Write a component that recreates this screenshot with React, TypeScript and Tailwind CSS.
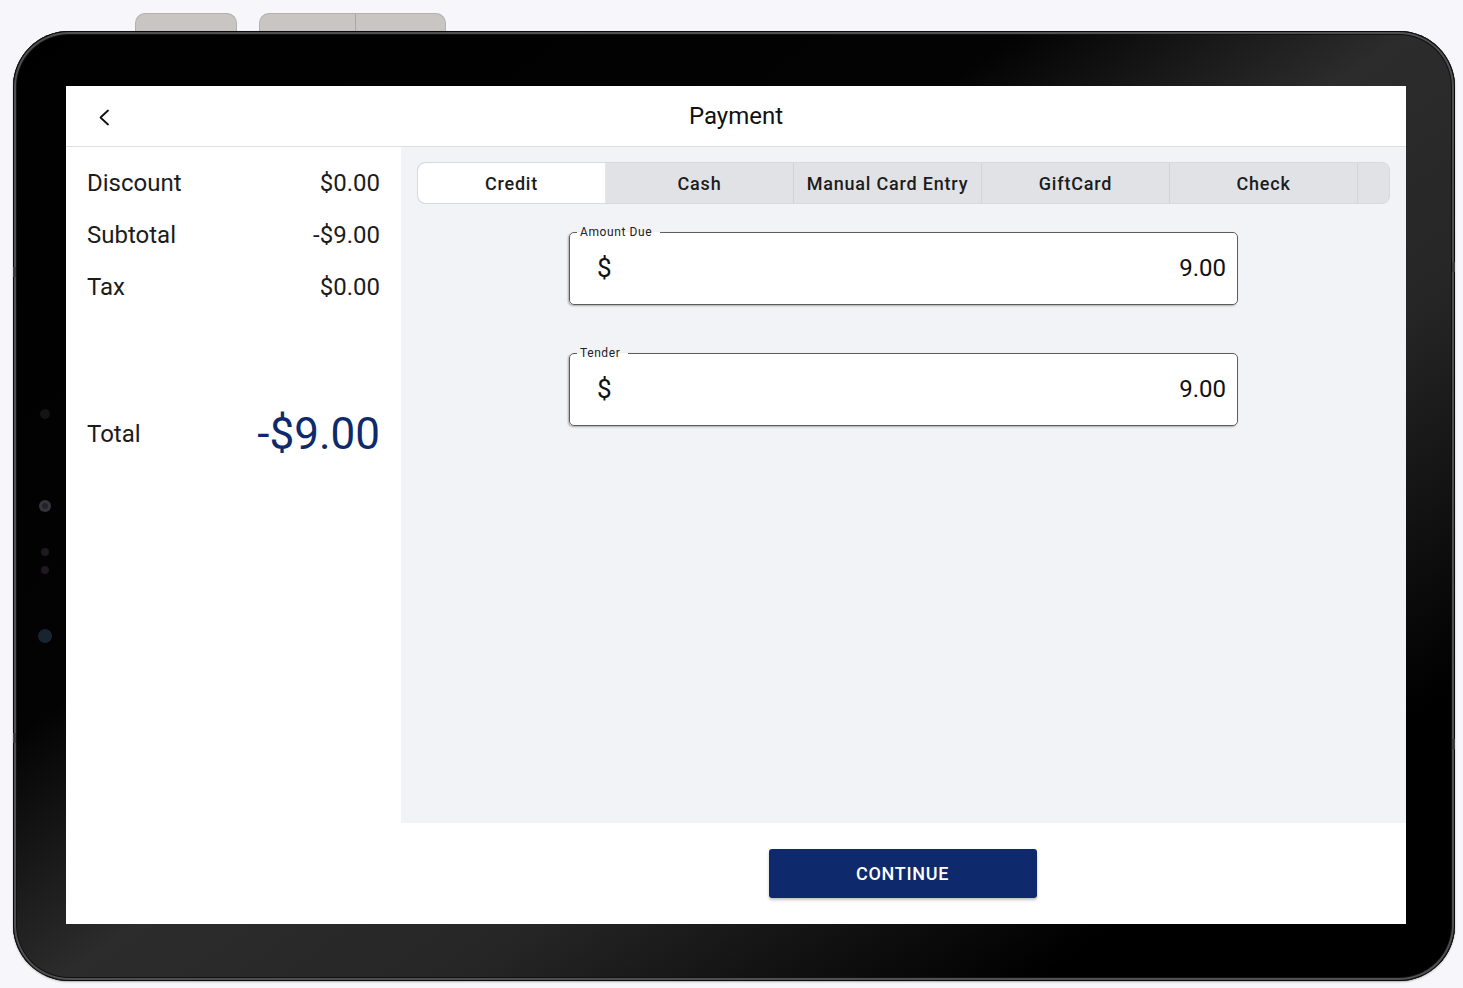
import React from 'react';

const tabs = ['Credit', 'Cash', 'Manual Card Entry', 'GiftCard', 'Check'];

const summary = [
  { label: 'Discount', value: '$0.00' },
  { label: 'Subtotal', value: '-$9.00' },
  { label: 'Tax', value: '$0.00' },
];

const MoneyField: React.FC<{ label: string; value: string; className?: string }> = ({ label, value, className }) => (
  <fieldset
    className={`w-[669px] rounded-[5px] border-[1.5px] border-[#5c5c5c] bg-white shadow-[-1px_1px_2px_rgba(0,0,0,0.3)] ${className ?? ''}`}
  >
    <legend className="ml-[7px] pl-[3px] pr-[8px] text-[12px] leading-[14px] tracking-[0.6px] text-[#222]">{label}</legend>
    <div className="flex h-[65px] items-center justify-between pb-[7px] pl-[27px] pr-[11px]">
      <span className="text-[26px] leading-none text-[#111]">$</span>
      <span className="text-[24px] leading-none text-[#111]">{value}</span>
    </div>
  </fieldset>
);

const App: React.FC = () => {
  return (
    <div
      className="min-h-screen w-full overflow-hidden bg-[#f7f7fb]"
      style={{ fontFamily: 'Roboto, "Liberation Sans", sans-serif' }}
    >
      {/* side buttons on top of the device */}
      <div className="flex h-[31px] items-end gap-[22px] pl-[135px]">
        <div className="h-[18px] w-[102px] rounded-t-[10px] border border-b-0 border-[#b3b0ad] bg-[#c8c5c2]" />
        <div className="flex h-[18px] w-[187px] rounded-t-[10px] border border-b-0 border-[#b3b0ad] bg-[#c8c5c2]">
          <div className="w-[96px] border-r border-[#aaa8a5]" />
        </div>
      </div>

      {/* device frame */}
      <div className="relative ml-[13px] h-[950px] w-[1442px] rounded-[56px] bg-[linear-gradient(145deg,#000_0%,#030303_36%,#2c2c2c_50%,#262626_64%,#000_85%,#000_100%)] pb-[57px] pl-[53px] pr-[49px] pt-[55px] shadow-[inset_0_0_0_1px_#0a0a0a,inset_0_0_0_3px_#4f4f4f,inset_0_0_0_4px_#111,0_1px_2px_rgba(0,0,0,0.3)]">
        {/* camera / sensors */}
        <div className="absolute left-[27px] top-[378px] h-[10px] w-[10px] rounded-full bg-[#141416]" />
        <div className="absolute left-[26px] top-[469px] flex h-[12px] w-[12px] items-center justify-center rounded-full bg-[#35353b]">
          <div className="h-[6px] w-[6px] rounded-full bg-[#22222c]" />
        </div>
        <div className="absolute left-[28px] top-[517px] h-[8px] w-[8px] rounded-full bg-[#1e191e]" />
        <div className="absolute left-[28px] top-[535px] h-[8px] w-[8px] rounded-full bg-[#1e191e]" />
        <div className="absolute left-[25px] top-[598px] h-[14px] w-[14px] rounded-full bg-[#182530]" />
        <div className="absolute left-[0px] top-[236px] h-[10px] w-[3px] bg-[#3c3c3c]" />
        <div className="absolute left-[0px] top-[702px] h-[10px] w-[3px] bg-[#3c3c3c]" />
        <div className="absolute right-[0px] top-[231px] h-[10px] w-[3px] bg-[#3c3c3c]" />
        <div className="absolute right-[0px] top-[708px] h-[10px] w-[3px] bg-[#3c3c3c]" />

        {/* screen */}
        <div className="flex h-full w-full flex-col bg-white text-[#1c1c1c]">
          <div className="relative flex h-[61px] shrink-0 items-center justify-center border-b border-[#dedede]">
            <button className="absolute left-[31px] top-[22px] flex h-[18px] w-[14px] items-center justify-center">
              <svg width="12" height="17" viewBox="0 0 12 17" fill="none">
                <polyline points="10,1.5 2.5,8.5 10,15.5" stroke="#111" strokeWidth="1.8" strokeLinecap="round" strokeLinejoin="round" />
              </svg>
            </button>
            <h1 className="text-[24px] leading-none text-[#111]">Payment</h1>
          </div>

          <div className="flex flex-1">
            {/* left summary */}
            <div className="flex w-[335px] shrink-0 flex-col px-[21px] pt-[10px]">
              {summary.map((row) => (
                <div key={row.label} className="flex h-[52px] items-center justify-between text-[24px] text-[#1c1c1c]">
                  <span>{row.label}</span>
                  <span>{row.value}</span>
                </div>
              ))}
              <div className="mt-[91px] flex h-[60px] items-center justify-between">
                <span className="text-[24px] text-[#1c1c1c]">Total</span>
                <span className="text-[44px] leading-none text-[#0e2a6c]">-$9.00</span>
              </div>
            </div>

            {/* right side */}
            <div className="flex flex-1 flex-col">
              <div className="flex h-[676px] flex-col items-center bg-[#f2f3f7] px-[16px] pt-[15px]">
                <div className="flex h-[42px] w-full overflow-hidden rounded-[8px] border border-[#d8d9de] bg-[#e1e2e6]">
                  {tabs.map((t, i) => (
                    <div
                      key={t}
                      className={`flex w-[188px] items-center justify-center border-r text-[18px] font-medium tracking-[0.8px] text-[#1c1c1c] ${
                        i === 0 ? 'rounded-l-[8px] border-[#e6e7ea] bg-white' : 'border-[#d3d4d8]'
                      }`}
                    >
                      {t}
                    </div>
                  ))}
                  <div className="flex-1" />
                </div>

                <MoneyField label="Amount Due" value="9.00" className="mt-[21px]" />
                <MoneyField label="Tender" value="9.00" className="mt-[41px]" />
              </div>

              <div className="flex flex-1 items-center justify-center pr-[2px]">
                <button className="h-[49px] w-[268px] rounded-[3px] bg-[#0e2a6c] text-[18px] font-medium tracking-[0.7px] text-white shadow-[0_2px_3px_rgba(0,0,0,0.25)]">
                  CONTINUE
                </button>
              </div>
            </div>
          </div>
        </div>
      </div>
    </div>
  );
};

export default App;
